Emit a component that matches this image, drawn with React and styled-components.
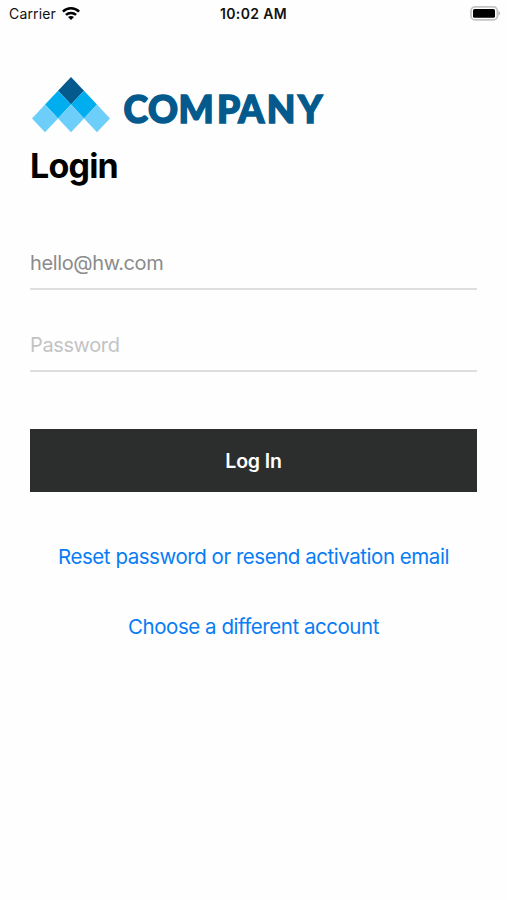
import React from 'react';
import styled, { createGlobalStyle } from 'styled-components';

const GlobalStyle = createGlobalStyle`
  * {
    box-sizing: border-box;
  }

  body {
    margin: 0;
    background-color: #fefefe;
    font-family: Inter, "Liberation Sans", sans-serif;
  }
`;

const Screen = styled.div`
  display: flex;
  flex-direction: column;
  min-height: 900px;
`;

const StatusBar = styled.header`
  display: grid;
  grid-template-columns: 1fr auto 1fr;
  align-items: center;
  height: 28px;
  padding: 0 6px;
  color: #111;
  font-size: 14px;
  line-height: 28px;
`;

const Carrier = styled.div`
  display: flex;
  align-items: center;
  gap: 6px;
  padding-left: 3px;
  letter-spacing: 0.15px;
`;

const Time = styled.div`
  font-weight: 600;
  letter-spacing: 0.35px;
`;

const BatteryIcon = styled.svg`
  justify-self: end;
`;

const Page = styled.main`
  display: flex;
  flex-direction: column;
  padding: 46px 30px 0;
`;

const Logo = styled.svg`
  display: block;
`;

const Wordmark = styled.text`
  fill: #045a8d;
  stroke: #045a8d;
  stroke-width: 1.5px;
  font-family: Lato, "Liberation Sans", sans-serif;
  font-size: 37px;
  font-weight: 900;
`;

const Title = styled.h1`
  margin: 7px 0 0;
  color: #000;
  font-size: 34px;
  font-weight: 700;
  line-height: 42px;
  letter-spacing: -0.8px;
`;

const Form = styled.form`
  display: flex;
  flex-direction: column;
  margin-top: 47px;
`;

const Input = styled.input`
  width: 447px;
  height: 56px;
  margin-bottom: 26px;
  padding: 4px 0 0;
  border: 0;
  border-bottom: 2px solid #dcdedf;
  border-radius: 0;
  outline: none;
  background: transparent;
  color: #8b8b8b;
  font-family: inherit;
  font-size: 20px;
  letter-spacing: -0.38px;

  &::placeholder {
    color: #c3c3c5;
    opacity: 1;
  }
`;

const Button = styled.button`
  height: 63px;
  margin-top: 31px;
  padding: 0;
  border: 0;
  background-color: #2c2e2d;
  color: #fff;
  font-family: inherit;
  font-size: 19.5px;
  font-weight: 600;
  letter-spacing: -0.15px;
  cursor: pointer;
`;

const Links = styled.nav`
  display: flex;
  flex-direction: column;
  align-items: center;
  gap: 40px;
  margin-top: 50px;
`;

const Link = styled.a`
  color: #087cf5;
  font-size: 20.5px;
  line-height: 30px;
  letter-spacing: -0.46px;
  text-decoration: none;
  white-space: nowrap;
`;

const TILES = [
  { x: 41, y: 16.8, fill: '#045a8d' },
  { x: 28, y: 30.6, fill: '#00aeef' },
  { x: 54, y: 30.6, fill: '#00aeef' },
  { x: 15, y: 44.4, fill: '#6dcff9' },
  { x: 41, y: 44.4, fill: '#6dcff9' },
  { x: 67, y: 44.4, fill: '#6dcff9' },
];

function Wifi() {
  return (
    <svg width="18" height="14" viewBox="0 0 18 14" fill="none" stroke="#000" strokeWidth="2.5">
      <path d="M0.9 4.7C5.5.2 12.5.2 17.1 4.7" />
      <path d="M3.9 7.9C6.8 5.2 11.2 5.2 14.1 7.9" />
      <path d="M6 10.1C7.7 8.5 10.3 8.5 12 10.1L9 13.1Z" fill="#000" stroke="none" />
    </svg>
  );
}

function Battery() {
  return (
    <BatteryIcon width="31" height="16" viewBox="0 0 31 16">
      <rect x="1" y="0.9" width="26.4" height="13" rx="4" fill="#fff" stroke="#c4c4c4" strokeWidth="1.8" />
      <rect x="3" y="3" width="22" height="8.8" rx="1.6" fill="#000" />
      <path d="M28.5 5.1c2.1 1 2.1 3.6 0 4.6z" fill="#b3b3b3" />
    </BatteryIcon>
  );
}

function CompanyLogo() {
  return (
    <Logo width="300" height="64" viewBox="0 0 300 64" role="img" aria-label="Company">
      {TILES.map(({ x, y, fill }) => (
        <path key={`${x}-${y}`} d={`M${x} ${y - 13.8}l13 13.8-13 13.8-13-13.8z`} fill={fill} />
      ))}
      <Wordmark x="93.5 118 148.5 187 208.3 236.8 268" y="49">COMPANY</Wordmark>
    </Logo>
  );
}

function App() {
  return (
    <React.Fragment>
      <GlobalStyle />
      <Screen>
        <StatusBar>
          <Carrier>
            Carrier
            <Wifi />
          </Carrier>
          <Time>10:02 AM</Time>
          <Battery />
        </StatusBar>
        <Page>
          <CompanyLogo />
          <Title>Login</Title>
          <Form onSubmit={e => e.preventDefault()}>
            <Input type="text" defaultValue="hello@hw.com" aria-label="Email" />
            <Input type="password" placeholder="Password" aria-label="Password" />
            <Button type="submit">Log In</Button>
          </Form>
          <Links>
            <Link href="#reset">Reset password or resend activation email</Link>
            <Link href="#accounts">Choose a different account</Link>
          </Links>
        </Page>
      </Screen>
    </React.Fragment>
  );
}

export default App;
